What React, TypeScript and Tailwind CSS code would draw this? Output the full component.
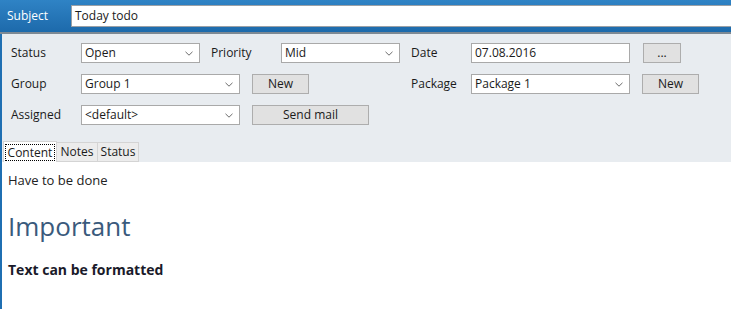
import React from "react";

const font = { fontFamily: '"Open Sans", "Noto Sans", sans-serif' };

function Chevron() {
  return (
    <svg width="8" height="5" viewBox="0 0 8 5" className="shrink-0">
      <path d="M0.5 0.8 L4 4.2 L7.5 0.8" fill="none" stroke="#6b6b6b" strokeWidth="1" />
    </svg>
  );
}

function Select({ value, w }: { value: string; w: string }) {
  return (
    <div className={`${w} h-[20px] bg-white border border-[#a9a9a9] flex items-center justify-between pl-[3px] pr-[6px] text-[12px] text-[#1a1a1a]`}>
      <span>{value}</span>
      <Chevron />
    </div>
  );
}

function Btn({ label, w }: { label: string; w: string }) {
  return (
    <div className={`${w} h-[20px] bg-[#e1e1e1] border border-[#adadad] flex items-center justify-center text-[12px] text-[#1a1a1a]`}>
      {label}
    </div>
  );
}

function Label({ text, w }: { text: string; w: string }) {
  return <div className={`${w} text-[12px] text-[#1a1a1a]`}>{text}</div>;
}

export default function App() {
  return (
    <div style={font} className="w-[731px] h-[309px] bg-white overflow-hidden flex flex-col">
      <div className="h-[32px] bg-gradient-to-b from-[#2f83c5] to-[#1d6aab] flex items-center shrink-0">
        <div className="w-[71px] pl-[7px] text-[12px] text-white">Subject</div>
        <div className="flex-1 h-[22px] bg-white border-y border-l border-[#9aa0a6] flex items-center pl-[3px] text-[12px] text-[#1a1a1a]">
          Today todo
        </div>
      </div>
      <div className="h-[2px] bg-[#7d8994] shrink-0" />
      <div className="flex-1 flex border-l-2 border-[#1f6fb2]">
        <div className="flex-1 flex flex-col">
          <div className="bg-[#e8ecf0] h-[128px] pt-[9px] pl-[9px] flex flex-col gap-[11px] relative">
            <div className="flex items-center">
              <Label text="Status" w="w-[70px]" />
              <Select value="Open" w="w-[119px]" />
              <div className="w-[11px]" />
              <Label text="Priority" w="w-[70px]" />
              <Select value="Mid" w="w-[119px]" />
              <div className="w-[11px]" />
              <Label text="Date" w="w-[60px]" />
              <div className="w-[159px] h-[20px] bg-white border border-[#a9a9a9] flex items-center pl-[3px] text-[12px] text-[#1a1a1a]">
                07.08.2016
              </div>
              <div className="w-[13px]" />
              <Btn label="..." w="w-[38px]" />
            </div>
            <div className="flex items-center">
              <Label text="Group" w="w-[70px]" />
              <Select value="Group 1" w="w-[159px]" />
              <div className="w-[12px]" />
              <Btn label="New" w="w-[57px]" />
              <div className="w-[102px]" />
              <Label text="Package" w="w-[60px]" />
              <Select value="Package 1" w="w-[159px]" />
              <div className="w-[12px]" />
              <Btn label="New" w="w-[57px]" />
            </div>
            <div className="flex items-center">
              <Label text="Assigned" w="w-[70px]" />
              <Select value="<default>" w="w-[159px]" />
              <div className="w-[12px]" />
              <Btn label="Send mail" w="w-[117px]" />
            </div>
            <div className="absolute left-0 right-0 bottom-0 h-[21px] flex items-end pl-[1px]">
              <div className="h-[21px] w-[54px] bg-white border border-b-0 border-[#d4d4d4] flex items-center justify-center">
                <div className="border border-dotted border-black px-[2px] leading-[15px] text-[12px] text-[#1a1a1a]">Content</div>
              </div>
              <div className="h-[20px] w-[41px] bg-[#ececec] border border-l-0 border-[#d4d4d4] flex items-center justify-center text-[12px] text-[#1a1a1a]">
                Notes
              </div>
              <div className="h-[20px] w-[41px] bg-[#ececec] border border-l-0 border-[#d4d4d4] flex items-center justify-center text-[12px] text-[#1a1a1a]">
                Status
              </div>
            </div>
          </div>
          <div className="flex-1 bg-white pl-[6px] pt-[9px] text-[#222]">
            <div className="text-[13px] leading-[19px]">Have to be done</div>
            <div className="mt-[19px] text-[26px] font-medium leading-[34px] text-[#3a5a7c]">Important</div>
            <div className="mt-[18px] text-[14px] font-bold leading-[18px] text-[#1a1a2a]">Text can be formatted</div>
          </div>
        </div>
      </div>
    </div>
  );
}
